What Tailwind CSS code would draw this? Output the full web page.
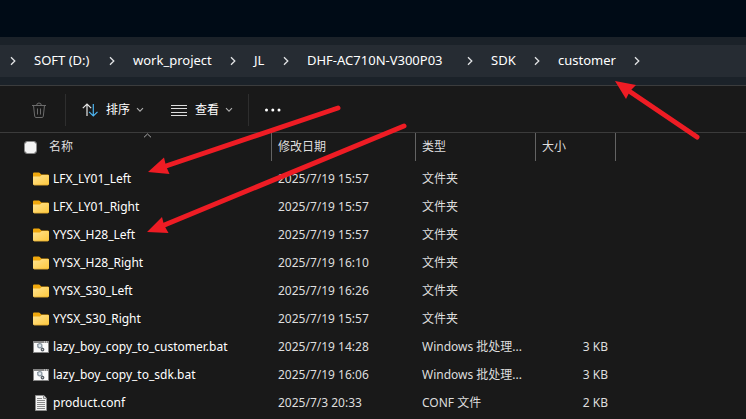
<!DOCTYPE html>
<html lang="zh-CN">
<head>
<meta charset="utf-8">
<meta name="viewport" content="width=device-width, initial-scale=1">
<title>customer</title>
<script src="https://cdn.jsdelivr.net/npm/@tailwindcss/browser@4"></script>
</head>
<body class="relative min-h-screen overflow-hidden bg-[#191919] font-['Noto_Sans','Noto_Sans_CJK_SC',sans-serif] text-xs text-white">
<svg class="absolute h-0 w-0" aria-hidden="true">
  <defs>
    <linearGradient id="fold" x1="0" y1="0" x2="1" y2="1"><stop offset="0" stop-color="#ffe391"/><stop offset="1" stop-color="#fdc83c"/></linearGradient>
    <symbol id="chev" viewBox="0 0 6 10"><path d="M1 1.2 4.8 5 1 8.8" fill="none" stroke="#e2e4e6" stroke-width="1.3"/></symbol>
    <symbol id="down" viewBox="0 0 8 6"><path d="M1 1.2 4 4.2 7 1.2" fill="none" stroke="#b0b0b0" stroke-width="1.1"/></symbol>
    <symbol id="folder" viewBox="0 0 16 14"><path d="M0 1.8C0 1 .6.5 1.3.5h4.500c.5 0 .8.2 1.100.5L8.200 2.500h6.500c.7 0 1.300.6 1.300 1.300V8H0z" fill="#f0a80d"/><path d="M0 4.600h6.200c.5 0 .8-.1 1.100-.4l.9-.8c.3-.3.6-.4 1-.4h5.600c.7 0 1.200.5 1.200 1.200v7.900c0 .7-.5 1.200-1.200 1.200H1.200C.5 13.300 0 12.800 0 12.100z" fill="url(#fold)"/><path d="M.4 12.800c.2.300.5.500.9.500h13.400c.4 0 .7-.2.9-.5z" fill="#d99a1c"/></symbol>
    <symbol id="bat" viewBox="0 0 16 12"><path d="M0 0h16v12H0z" fill="#858585"/><path d="M1 2h14v9H1z" fill="#fafafa"/><path d="M11 .5h1v1h-1zM13 .5h1v1h-1z" fill="#eee"/><circle cx="6.800" cy="4.800" r="2.100" fill="#dfe8ee" stroke="#8d99a3" stroke-width="1.300"/><path d="M4 3.500h1M6.800 2v1M9 6.500l1 .8" stroke="#8d99a3"/><circle cx="9.500" cy="8.600" r="1.300" fill="#ddd" stroke="#555c63" stroke-width="1.200"/></symbol>
    <symbol id="doc" viewBox="0 0 12 16"><path d="M.5.5h8.300l2.700 2.700v12.300H.5z" fill="#f4f4f4" stroke="#8c8c8c"/><path d="M8.500.5v3h3" fill="#ddd" stroke="#8c8c8c"/><path d="M2 3.500h5M2 5.500h8M2 7.500h8M2 9.500h8M2 11.500h8M2 13.500h8" stroke="#8a8a8a"/></symbol>
  </defs>
</svg>
<div class="h-[37px] bg-[#000b16]"></div>
<nav aria-label="路径" class="border-b border-[#3b3c3d] bg-[#1b2229] py-2">
  <ol class="flex h-8 items-center gap-[18px] bg-[#262c33] pl-[10px] text-[13px]">
    <li class="flex"><svg class="h-[10px] w-[6px]"><use href="#chev"/></svg></li>
    <li class="flex items-center gap-[18px]"><a href="#" class="w-[57px] whitespace-nowrap">SOFT (D:)</a><svg class="h-[10px] w-[6px]"><use href="#chev"/></svg></li>
    <li class="flex items-center gap-[18px]"><a href="#" class="w-[79px] whitespace-nowrap">work_project</a><svg class="h-[10px] w-[6px]"><use href="#chev"/></svg></li>
    <li class="flex items-center gap-[18px]"><a href="#" class="w-[11px] whitespace-nowrap">JL</a><svg class="h-[10px] w-[6px]"><use href="#chev"/></svg></li>
    <li class="flex items-center gap-[18px]"><a href="#" class="w-[142px] whitespace-nowrap">DHF-AC710N-V300P03</a><svg class="h-[10px] w-[6px]"><use href="#chev"/></svg></li>
    <li class="flex items-center gap-[18px]"><a href="#" class="w-[25px] whitespace-nowrap">SDK</a><svg class="h-[10px] w-[6px]"><use href="#chev"/></svg></li>
    <li class="flex items-center gap-[18px]"><a href="#" class="w-[58px] whitespace-nowrap">customer</a><svg class="h-[10px] w-[6px]"><use href="#chev"/></svg></li>
  </ol>
</nav>
<div role="toolbar" aria-label="工具栏" class="flex h-[47px] items-center border-b border-[#3b3b3b] pt-[2px] pl-[31px]">
  <button aria-label="删除" disabled class="flex"><svg class="h-4 w-4" viewBox="0 0 16 16" fill="none" stroke="#6c6c6c"><path d="M1 3.500h14M5.700 3.300a2.300 2.300 0 0 1 4.600 0M2.500 3.500l1.200 10.800c.1.700.6 1.200 1.300 1.200h6c.7 0 1.200-.5 1.300-1.200L13.500 3.500M6.500 6.500v6M9.500 6.500v6"/></svg></button>
  <span class="ml-[18px] h-8 w-px bg-[#2e2e2e]"></span>
  <button class="ml-4 flex items-center gap-2"><svg class="h-[14px] w-4" viewBox="0 0 16 14" fill="none" stroke-width="1.200"><path d="M5 13V1M.8 5.200 5 1l4.200 4.200" stroke="#e6e6e6"/><path d="M11.300 1v12M7.100 8.800l4.200 4.200 4.200-4.200" stroke="#4cb4f0"/></svg><span>排序</span><svg class="-ml-[2px] h-[6px] w-2"><use href="#down"/></svg></button>
  <button class="ml-[27px] flex items-center gap-2"><svg class="h-[11px] w-4" viewBox="0 0 16 11" stroke="#dcdcdc"><path d="M0 .5h16M0 3.500h16M0 7.500h16M0 10.500h16"/></svg><span>查看</span><svg class="-ml-[2px] h-[6px] w-2"><use href="#down"/></svg></button>
  <span class="ml-[15px] h-8 w-px bg-[#2e2e2e]"></span>
  <button aria-label="更多" class="ml-[15px] flex"><svg class="h-1 w-[18px]" viewBox="0 0 18 4" fill="#fff"><circle cx="2.500" cy="2" r="1.500"/><circle cx="8.800" cy="2" r="1.500"/><circle cx="15" cy="2" r="1.500"/></svg></button>
</div>
<table class="w-full table-fixed border-collapse text-left text-[#dedede]">
  <colgroup><col class="w-[272px]"><col class="w-[144px]"><col class="w-[120px]"><col class="w-[80px]"><col></colgroup>
  <thead>
    <tr class="h-7 [&>th]:p-0 [&>th]:font-normal">
      <th class="relative"><div class="flex h-7 items-center border-r border-[#636363] pl-[25px]"><input type="checkbox" aria-label="全选" class="h-[11px] w-[11px] appearance-none rounded-[2px] bg-[#f3f3f3] outline outline-[#8a8a8a]"><span class="ml-[13px]">名称</span></div><svg class="absolute top-0 left-[143px] h-[5px] w-[9px]" viewBox="0 0 9 5"><path d="M1 4.300 4.500 1 8 4.300" fill="none" stroke="#a8a8a8"/></svg></th>
      <th><div class="flex h-7 items-center border-r border-[#636363] pl-[6px]">修改日期</div></th>
      <th><div class="flex h-7 items-center border-r border-[#636363] pl-[6px]">类型</div></th>
      <th><div class="flex h-7 items-center border-r border-[#636363] pl-[6px]">大小</div></th>
      <th></th>
    </tr>
    <tr class="h-1" aria-hidden="true"><td></td></tr>
  </thead>
  <tbody class="[&_td]:h-7 [&_td]:p-0 [&_td]:pl-[6px]">
    <tr><td><div class="flex items-center gap-1 pl-[27px] text-white"><svg class="h-[14px] w-4"><use href="#folder"/></svg>LFX_LY01_Left</div></td><td>2025/7/19 15:57</td><td>文件夹</td><td></td><td></td></tr>
    <tr><td><div class="flex items-center gap-1 pl-[27px] text-white"><svg class="h-[14px] w-4"><use href="#folder"/></svg>LFX_LY01_Right</div></td><td>2025/7/19 15:57</td><td>文件夹</td><td></td><td></td></tr>
    <tr><td><div class="flex items-center gap-1 pl-[27px] text-white"><svg class="h-[14px] w-4"><use href="#folder"/></svg>YYSX_H28_Left</div></td><td>2025/7/19 15:57</td><td>文件夹</td><td></td><td></td></tr>
    <tr><td><div class="flex items-center gap-1 pl-[27px] text-white"><svg class="h-[14px] w-4"><use href="#folder"/></svg>YYSX_H28_Right</div></td><td>2025/7/19 16:10</td><td>文件夹</td><td></td><td></td></tr>
    <tr><td><div class="flex items-center gap-1 pl-[27px] text-white"><svg class="h-[14px] w-4"><use href="#folder"/></svg>YYSX_S30_Left</div></td><td>2025/7/19 16:26</td><td>文件夹</td><td></td><td></td></tr>
    <tr><td><div class="flex items-center gap-1 pl-[27px] text-white"><svg class="h-[14px] w-4"><use href="#folder"/></svg>YYSX_S30_Right</div></td><td>2025/7/19 15:57</td><td>文件夹</td><td></td><td></td></tr>
    <tr><td><div class="flex items-center gap-1 pl-[27px] text-white"><svg class="h-3 w-4"><use href="#bat"/></svg>lazy_boy_copy_to_customer.bat</div></td><td>2025/7/19 14:28</td><td>Windows 批处理...</td><td><div class="pr-2 text-right">3 KB</div></td><td></td></tr>
    <tr><td><div class="flex items-center gap-1 pl-[27px] text-white"><svg class="h-3 w-4"><use href="#bat"/></svg>lazy_boy_copy_to_sdk.bat</div></td><td>2025/7/19 16:06</td><td>Windows 批处理...</td><td><div class="pr-2 text-right">3 KB</div></td><td></td></tr>
    <tr><td><div class="flex items-center gap-1 pl-[27px] text-white"><svg class="h-4 w-4"><use href="#doc"/></svg>product.conf</div></td><td>2025/7/3 20:33</td><td>CONF 文件</td><td><div class="pr-2 text-right">2 KB</div></td><td></td></tr>
  </tbody>
</table>
<svg class="pointer-events-none absolute top-0 left-0 h-[419px] w-[746px]" viewBox="0 0 746 419" fill="#ee1c24" stroke="#ee1c24" aria-hidden="true">
  <g stroke-width="5" stroke-linecap="round"><path d="M338 108 163 167"/><path d="M404 126 162 226"/><path d="M697 137 629 91"/></g>
  <g stroke="none"><path d="M148 172 164 157.500 166 166 169.500 174z"/><path d="M147 232 162 217 164 225 168.500 233z"/><path d="M615 81 636 85 630 91 626 99z"/></g>
</svg>
</body>
</html>
